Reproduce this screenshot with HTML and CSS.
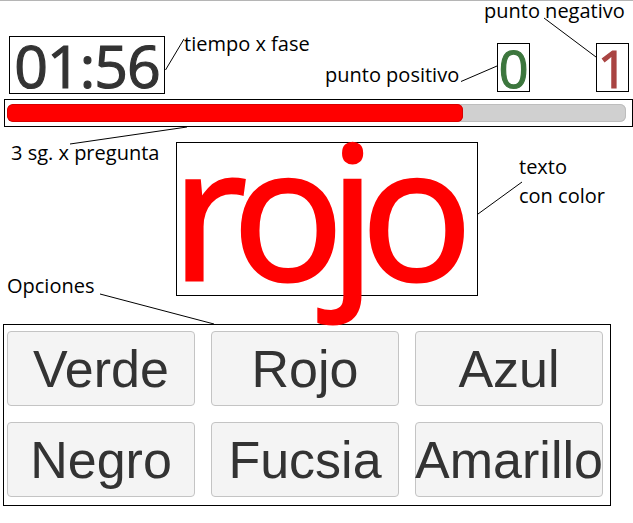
FILE: index.html
```html
<!DOCTYPE html>
<html lang="es">
<head>
<meta charset="utf-8">
<title>Juego de colores</title>
<link rel="stylesheet" href="styles.css">
</head>
<body>
<div class="page">
  <div class="topline"></div>
  <header class="top">
    <div class="timer">01:56</div>
    <div class="score pos">0</div>
    <div class="score neg">1</div>
  </header>
  <div class="bar">
    <div class="track"><div class="fill" style="width:456px"></div></div>
  </div>
  <div class="word">rojo</div>
  <div class="options">
    <button class="opt">Verde</button>
    <button class="opt">Rojo</button>
    <button class="opt">Azul</button>
    <button class="opt">Negro</button>
    <button class="opt">Fucsia</button>
    <button class="opt">Amarillo</button>
  </div>

  <svg class="leaders" width="633" height="523" viewBox="0 0 633 523">
    <line x1="165.5" y1="70" x2="184" y2="39"/>
    <line x1="187" y1="127" x2="70" y2="144"/>
    <line x1="461" y1="81.5" x2="497" y2="66"/>
    <line x1="544" y1="18" x2="596" y2="57"/>
    <line x1="478" y1="214" x2="522" y2="182"/>
    <line x1="100" y1="294" x2="214" y2="324"/>
  </svg>
  <span class="note n-time">tiempo x fase</span>
  <span class="note n-neg">punto negativo</span>
  <span class="note n-pos">punto positivo</span>
  <span class="note n-bar">3 sg. x pregunta</span>
  <span class="note n-opt">Opciones</span>
  <span class="note n-color">texto<br>con color</span>
</div>
</body>
</html>
```

FILE: styles.css
```css
html, body {
  margin: 0;
  padding: 0;
  background: #fff;
}

.page {
  position: relative;
  width: 633px;
  height: 523px;
  overflow: hidden;
  font-family: "Open Sans", "DejaVu Sans", sans-serif;
}

.topline {
  height: 1px;
  background: #b5b5b5;
}

.top {
  display: flex;
  align-items: flex-start;
  padding-top: 35px;
}

.timer {
  margin-left: 9px;
  width: 154px;
  height: 56px;
  border: 1px solid #000;
  font-family: "Open Sans", "Noto Sans", sans-serif;
  font-size: 59px;
  line-height: 56px;
  text-align: center;
  color: #333;
  -webkit-text-stroke: 1.2px #333;
  letter-spacing: -1px;
}

.score {
  margin-top: 7px;
  width: 31px;
  height: 47px;
  border: 1px solid #000;
  font-family: "Open Sans", "Noto Sans", sans-serif;
  font-size: 52px;
  line-height: 47px;
  text-align: center;
}

.score.pos {
  margin-left: 332px;
  color: #3c763d;
  -webkit-text-stroke: 1.2px #3c763d;
}

.score.neg {
  margin-left: 66px;
  color: #a94442;
  -webkit-text-stroke: 1.2px #a94442;
}

.bar {
  margin: 5px 0 0 4px;
  width: 623px;
  height: 18px;
  padding: 4px 2px;
  border: 1px solid #000;
}

.track {
  width: 619px;
  height: 18px;
  border-radius: 6px;
  background: #d0d0d0;
  box-shadow: inset 0 0 0 1px #bdbdbd;
  overflow: hidden;
}

.fill {
  height: 100%;
  border-radius: 6px;
  background: #ff0000;
  box-shadow: inset 0 0 0 1px #d80000;
}

.word {
  margin: 15px 0 0 176px;
  width: 300px;
  height: 152px;
  border: 1px solid #000;
  color: #ff0000;
  -webkit-text-stroke: 3px #ff0000;
  font-family: "Open Sans", "Noto Sans", sans-serif;
  font-size: 186px;
  line-height: 130px;
  letter-spacing: -15px;
  text-indent: -6px;
  text-align: left;
  white-space: nowrap;
}

.options {
  margin: 28px 0 0 3px;
  width: 596px;
  height: 166px;
  padding: 6px 7px 8px 3px;
  border: 1px solid #000;
  display: grid;
  grid-template-columns: repeat(3, 188px);
  grid-auto-rows: 75px;
  gap: 16px;
}

.opt {
  display: flex;
  align-items: center;
  justify-content: center;
  padding: 0;
  margin: 0;
  border: 1px solid #c4c4c4;
  border-radius: 4px;
  background: #f4f4f4;
  color: #333;
  font-family: "Liberation Sans", Arial, sans-serif;
  font-size: 52px;
  white-space: nowrap;
  overflow: visible;
}

.leaders {
  position: absolute;
  left: 0;
  top: 0;
  pointer-events: none;
}

.leaders line {
  stroke: #000;
  stroke-width: 1;
}

.note {
  position: absolute;
  font-size: 20px;
  line-height: 22px;
  color: #000;
  white-space: nowrap;
}

.n-time { left: 184px; top: 33px; }
.n-neg { left: 484px; top: 0; }
.n-pos { left: 325px; top: 64px; }
.n-bar { left: 11px; top: 142px; }
.n-opt { left: 7px; top: 275px; }
.n-color { left: 519px; top: 152px; line-height: 29px; }
```
